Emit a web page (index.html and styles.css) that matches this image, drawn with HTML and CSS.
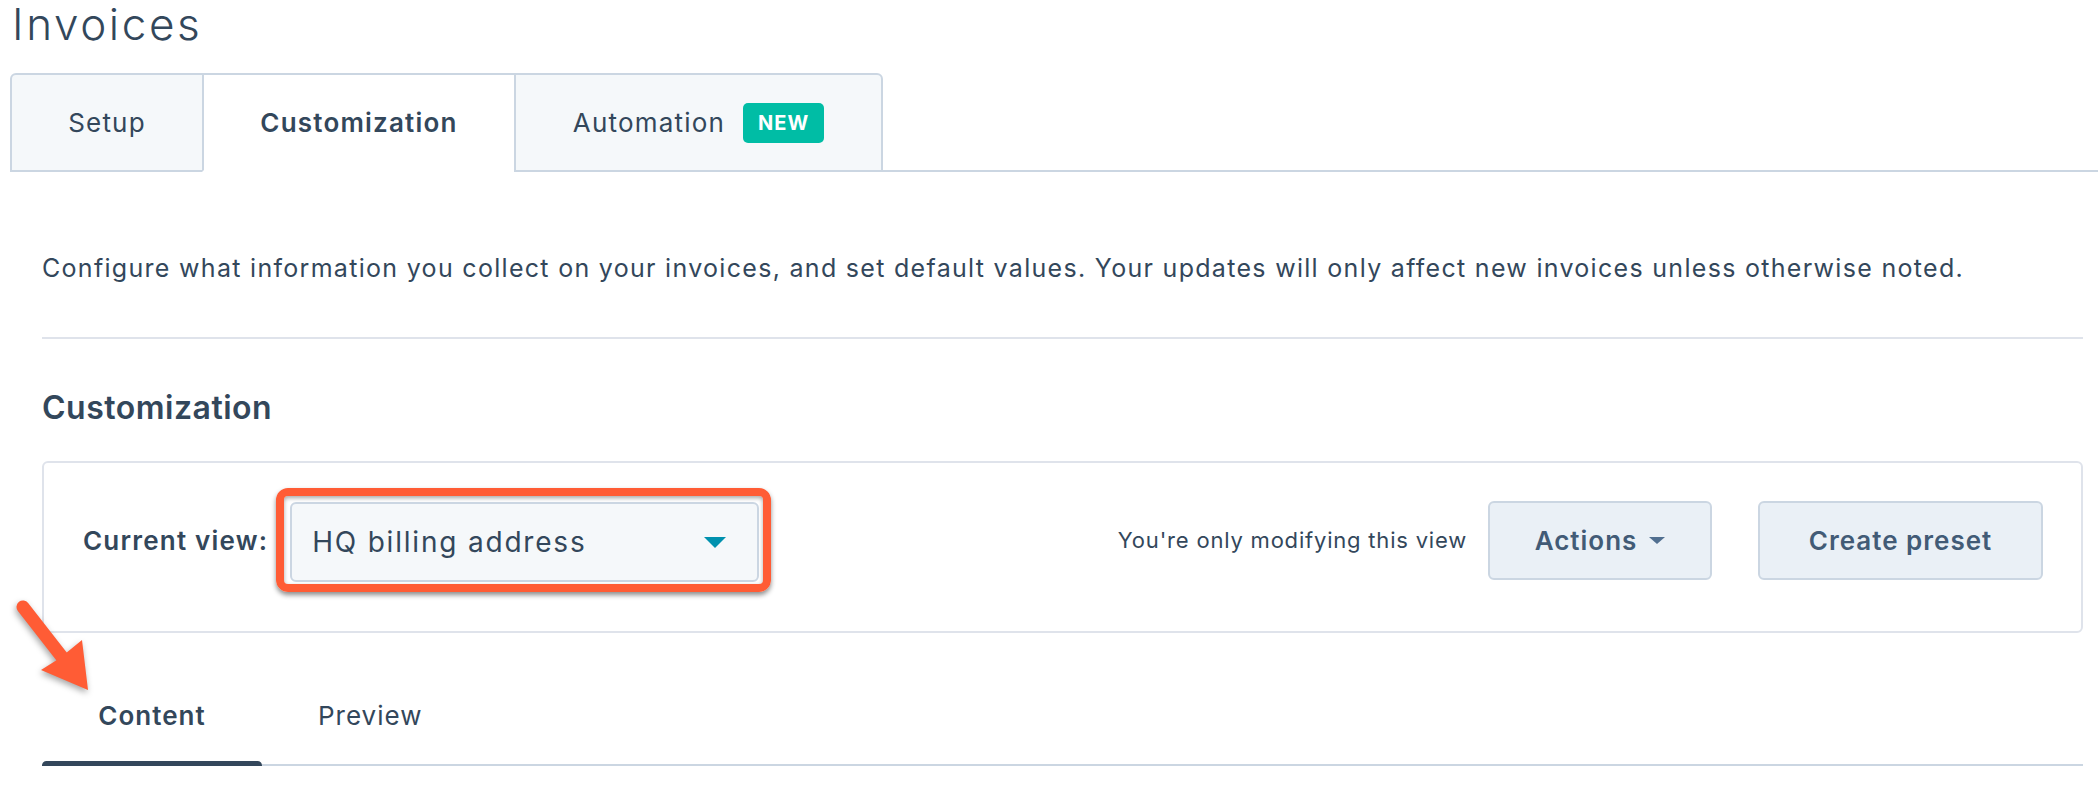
FILE: index.html
```html
<!DOCTYPE html>
<html lang="en">
<head>
    <meta charset="UTF-8">
    <meta name="viewport" content="width=device-width, initial-scale=1.0">
    <title>Invoices</title>
    <link rel="stylesheet" href="styles.css">
</head>
<body>
    <h1 class="page-title">Invoices</h1>
    <nav class="tabs">
        <a class="tab tab-first">Setup</a>
        <a class="tab active">Customization</a>
        <a class="tab tab-last">Automation <span class="badge">NEW</span></a>
    </nav>
    <main class="content">
        <p class="intro">Configure what information you collect on your invoices, and set default values. Your updates will only affect new invoices unless otherwise noted.</p>
        <hr class="divider">
        <h2 class="section-title">Customization</h2>
        <div class="view-card">
            <span class="view-label">Current view:</span>
            <div class="highlight">
                <button class="view-select">HQ billing address <span class="select-caret"></span></button>
            </div>
            <span class="view-note">You're only modifying this view</span>
            <button class="btn">Actions <span class="btn-caret"></span></button>
            <button class="btn btn-wide">Create preset</button>
        </div>
        <div class="subtabs">
            <span class="subtab active">Content</span>
            <span class="subtab">Preview</span>
        </div>
    </main>
    <svg class="callout-arrow" width="110" height="110" viewBox="0 0 110 110">
        <line x1="23" y1="17" x2="62" y2="67" stroke="#ff5c35" stroke-width="13" stroke-linecap="round"/>
        <polygon points="88,100 41,80 60,68 82,50" fill="#ff5c35"/>
    </svg>
</body>
</html>
```

FILE: styles.css
```css
body {
    margin: 0;
    position: relative;
    font-family: Inter, "Open Sans", sans-serif;
    color: #33475b;
    background-color: #fff;
}
.page-title {
    margin: 0;
    padding-left: 12px;
    font-size: 44px;
    line-height: 48px;
    font-weight: 300;
    letter-spacing: 2.6px;
}
.tabs {
    display: flex;
    margin: 25px 0 0 10px;
    border-bottom: 2px solid #cbd6e2;
}
.tab {
    display: flex;
    align-items: center;
    justify-content: center;
    box-sizing: border-box;
    height: 99px;
    margin-bottom: -2px;
    border: 2px solid #cbd6e2;
    background-color: #f5f8fa;
    font-size: 26px;
    letter-spacing: 1.2px;
    cursor: pointer;
}
.tab + .tab {
    margin-left: -2px;
}
.tab-first {
    width: 194px;
    border-top-left-radius: 6px;
}
.tab.active {
    width: 314px;
    background-color: #fff;
    border-bottom-color: #fff;
    font-weight: 600;
}
.tab-last {
    width: 369px;
    border-top-right-radius: 6px;
}
.badge {
    margin-left: 18px;
    padding: 0 15px;
    height: 40px;
    line-height: 40px;
    border-radius: 5px;
    background-color: #00bda5;
    color: #fff;
    font-size: 20px;
    font-weight: 700;
    letter-spacing: 1px;
}
.content {
    padding: 0 15px 0 42px;
}
.intro {
    margin: 78px 0 0;
    font-size: 25px;
    line-height: 36px;
    letter-spacing: 1.3px;
}
.divider {
    margin: 51px 0 0;
    border: none;
    border-top: 2px solid #dfe3eb;
}
.section-title {
    margin: 49px 0 0;
    font-size: 32px;
    line-height: 40px;
    font-weight: 600;
    letter-spacing: 0.5px;
}
.view-card {
    display: flex;
    align-items: center;
    box-sizing: border-box;
    height: 172px;
    margin-top: 33px;
    padding: 0 38px 14px 39px;
    border: 2px solid #dfe3eb;
    border-radius: 6px;
}
.view-label {
    font-size: 26px;
    font-weight: 600;
    letter-spacing: 1.2px;
    margin-right: 8px;
}
.highlight {
    padding: 6px 4px 2px 6px;
    border: 8px solid #ff5c35;
    border-radius: 12px;
    box-shadow: 0 3px 5px rgba(0, 0, 0, 0.45), inset 0 2px 4px rgba(0, 0, 0, 0.35);
}
.view-select {
    display: flex;
    align-items: center;
    justify-content: space-between;
    box-sizing: border-box;
    width: 469px;
    height: 80px;
    padding: 0 31px 0 20px;
    border: 2px solid #cbd6e2;
    border-radius: 6px;
    background-color: #f5f8fa;
    color: #33475b;
    font-family: inherit;
    font-size: 28px;
    letter-spacing: 1.8px;
}
.select-caret {
    width: 0;
    height: 0;
    border-left: 11.5px solid transparent;
    border-right: 11.5px solid transparent;
    border-top: 11px solid #0091ae;
}
.view-note {
    margin-left: auto;
    margin-right: 21px;
    font-size: 22px;
    letter-spacing: 0.8px;
}
.btn {
    display: flex;
    align-items: center;
    justify-content: center;
    box-sizing: border-box;
    width: 224px;
    height: 79px;
    border: 2px solid #cbd6e2;
    border-radius: 6px;
    background-color: #eaf0f6;
    color: #425b76;
    font-family: inherit;
    font-size: 26px;
    font-weight: 600;
    letter-spacing: 1px;
}
.btn-wide {
    width: 285px;
    margin-left: 46px;
}
.btn-caret {
    margin-left: 12px;
    width: 0;
    height: 0;
    border-left: 8px solid transparent;
    border-right: 8px solid transparent;
    border-top: 7px solid #516f90;
}
.subtabs {
    display: flex;
    margin-top: 66px;
    border-bottom: 2px solid #cbd6e2;
}
.subtab {
    position: relative;
    padding: 0 56px 31px;
    font-size: 26px;
    line-height: 34px;
    letter-spacing: 1px;
}
.subtab.active {
    width: 220px;
    box-sizing: border-box;
    text-align: center;
    font-weight: 600;
}
.subtab.active::after {
    content: "";
    position: absolute;
    left: 0;
    right: 0;
    bottom: -5.5px;
    height: 9px;
    border-radius: 5px;
    background-color: #33475b;
}
.callout-arrow {
    position: absolute;
    left: 0;
    top: 590px;
    filter: drop-shadow(-1px 3px 3px rgba(0, 0, 0, 0.35));
}
```
